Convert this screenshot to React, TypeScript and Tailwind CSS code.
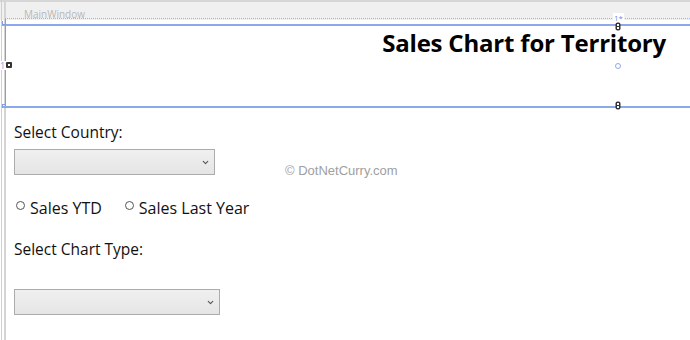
import { ChevronDown } from 'lucide-react'

const Lock = () => (
  <svg width="6" height="9" viewBox="0 0 6 9">
    <rect x="0.5" y="0.5" width="5" height="8" rx="2" fill="#333" />
    <rect x="2" y="2" width="2" height="2" fill="#fff" />
    <rect x="2" y="5" width="2" height="2" fill="#fff" />
  </svg>
)

const Combo = ({ width }: { width: string }) => (
  <div
    className={`${width} h-[26px] border border-[#acacac] bg-gradient-to-b from-[#f0f0f0] to-[#e5e5e5] flex items-center justify-end pr-[4px]`}
  >
    <ChevronDown size={9} strokeWidth={3} className="text-[#555]" />
  </div>
)

const Radio = ({ label }: { label: string }) => (
  <label className="flex items-end gap-[5px]">
    <span className="w-[9px] h-[9px] rounded-full border border-[#555] bg-white mb-[10px]" />
    <span className="text-[16px] text-[#111]">{label}</span>
  </label>
)

export default function App() {
  return (
    <div className="relative w-[690px] h-[340px] bg-white overflow-hidden font-['Open_Sans','Noto_Sans',sans-serif]">
      {/* window chrome */}
      <div className="h-[20px] bg-[#f0f0f0] border-t-2 border-[#d6d6d6] pl-[24px] flex items-end">
        <span className="text-[10px] leading-[12px] text-[#b8b8b8] font-['Open_Sans',sans-serif]">MainWindow</span>
      </div>

      {/* header row */}
      <div className="h-[87px] pt-[5px] pr-[24px] flex justify-end items-start">
        <h1 className="text-[24px] font-bold text-black tracking-[-0.2px]">Sales Chart for Territory</h1>
      </div>

      {/* form */}
      <div className="pl-[14px] pt-[14px] flex flex-col">
        <p className="text-[15.5px] text-[#111] leading-[22px]">Select Country:</p>
        <div className="mt-[6px]">
          <Combo width="w-[201px]" />
        </div>
        <div className="mt-[21px] ml-[2px] flex gap-[23px]">
          <Radio label="Sales YTD" />
          <Radio label="Sales Last Year" />
        </div>
        <p className="mt-[18px] text-[15.5px] text-[#111] leading-[22px]">Select Chart Type:</p>
        <div className="mt-[29px]">
          <Combo width="w-[206px]" />
        </div>
      </div>

      {/* watermark */}
      <span className="absolute left-[285px] top-[161px] text-[13px] text-[#a0a0a0] font-['Liberation_Sans',Arial,sans-serif]">
        © DotNetCurry.com
      </span>

      {/* designer overlays */}
      <div className="absolute left-[1px] top-0 bottom-0 w-[1px] bg-[#cfcfcf]" />
      <div className="absolute left-[4px] top-0 bottom-0 w-[2px] bg-[#d4d4d4]" />
      <div className="absolute left-[5px] top-[18px] h-[90px] w-[1px] bg-[#7f9ee8]" />
      <div className="absolute left-[5px] right-0 top-[18px] border-t border-dotted border-[#9db4ee]" />
      <div className="absolute left-[2px] right-0 top-[24px] h-[2px] bg-[#8aa8ea]" />
      <div className="absolute left-[2px] right-0 top-[106px] h-[2px] bg-[#8aa8ea]" />
      <div className="absolute left-[2px] top-[21px] w-[4px] h-[4px] border-l border-b border-[#7f9ee8]" />
      <div className="absolute left-[2px] top-[104px] w-[4px] h-[4px] border-l border-t border-[#7f9ee8]" />

      <div className="absolute left-0 top-[61px] text-[9px] leading-none text-[#7f9ee8] bg-white">1*</div>
      <div className="absolute left-[6px] top-[62px]">
        <svg width="6" height="6" viewBox="0 0 6 6">
          <rect x="0" y="0" width="6" height="6" rx="1" fill="#333" />
          <rect x="2" y="2" width="2" height="2" fill="#fff" />
        </svg>
      </div>

      <div className="absolute left-[613px] top-[13px] bg-white px-[1px] text-[8px] leading-[10px] text-[#6f8fe0]">1*</div>
      <div className="absolute left-[615px] top-[22px]">
        <Lock />
      </div>
      <div className="absolute left-[615px] top-[63px] w-[6px] h-[6px] rounded-full border border-[#8fa8ea] bg-white" />
      <div className="absolute left-[615px] top-[101px]">
        <Lock />
      </div>
    </div>
  )
}
